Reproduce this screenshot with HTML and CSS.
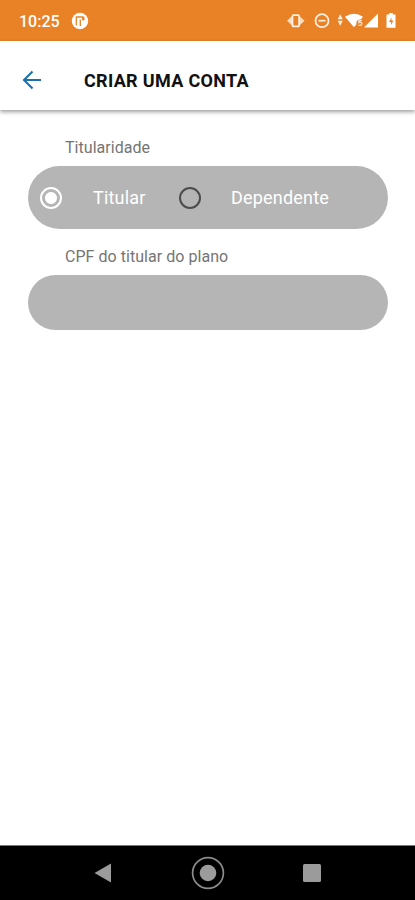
FILE: index.html
```html
<!DOCTYPE html>
<html lang="pt-BR">
<head>
    <meta charset="UTF-8">
    <meta name="viewport" content="width=device-width, initial-scale=1.0">
    <title>Criar uma conta</title>
    <link rel="stylesheet" href="styles.css">
</head>
<body>
    <div class="screen">
        <div class="status-bar">
            <span class="clock">10:25</span>
            <svg class="app-icon" width="18" height="18" viewBox="0 0 18 18">
                <circle cx="9" cy="9" r="8.2" fill="#fff"/>
                <path d="M5.300 4.500v9M5.300 5h6.500M9.300 7.500v6.500" fill="none" stroke="#e98227" stroke-width="1.300"/>
                <rect x="11" y="4.500" width="2.500" height="4" rx="1" fill="#e98227"/>
            </svg>
            <svg class="status-icons" width="112" height="20" viewBox="287 11 112 20">
                <!-- vibrate -->
                <path d="M292.500 15.500v10.500l-5.500-5.200zM299 15.500v10.500l5.500-5.200z" fill="#fbdcc0"/>
                <rect x="292.500" y="15.200" width="6.600" height="11.200" rx="1" fill="#e98227" stroke="#fff1e4" stroke-width="1.700"/>
                <!-- do not disturb -->
                <circle cx="322" cy="20.700" r="6.500" fill="none" stroke="#fff1e4" stroke-width="1.700"/>
                <path d="M318.500 20.700h7" stroke="#fff1e4" stroke-width="1.700"/>
                <!-- wifi -->
                <path d="M337.700 19.200l2.500-5 2.500 5zM337.700 20.700l2.500 5 2.500-5z" fill="#fff1e4"/>
                <path d="M345 16.700q9-6 18 0l-9 10.500z" fill="#fff"/>
                <circle cx="360" cy="23.200" r="3.600" fill="#e98227"/>
                <path d="M361.800 20.500h-3v2q3-.7 3 1.300t-3.300 1.400" fill="none" stroke="#fbdcc0" stroke-width="1.400"/>
                <!-- signal and battery -->
                <path d="M378 13.500v14h-14z" fill="#fff"/>
                <path d="M389.200 13h3.600v1.600h2.700v13.200h-9v-13.200h2.700z" fill="#fff"/>
                <path d="M391.500 17.500l-2.500 4.500h2v3l2.500-4.500h-2z" fill="#e98227"/>
            </svg>
        </div>
        <div class="header">
            <svg class="back" width="20" height="20" viewBox="0 0 20 20">
                <path d="M19 10H2M10.500 1.500L2 10l8.500 8.500" fill="none" stroke="#1c70ae" stroke-width="2.100"/>
            </svg>
            <h1 class="title">CRIAR UMA CONTA</h1>
        </div>
        <div class="form">
            <label class="label">Titularidade</label>
            <div class="radio-group">
                <span class="radio radio-checked"></span>
                <span class="option option-first">Titular</span>
                <span class="radio"></span>
                <span class="option">Dependente</span>
            </div>
            <label class="label label-cpf">CPF do titular do plano</label>
            <div class="input"></div>
        </div>
        <div class="nav-bar">
            <svg width="18" height="20" viewBox="0 0 18 20">
                <path d="M17 0.500v19L0.500 10z" fill="#9b9b9b"/>
            </svg>
            <svg width="34" height="34" viewBox="0 0 34 34">
                <circle cx="17" cy="17" r="15.400" fill="none" stroke="#8c8c8c" stroke-width="1.700"/>
                <circle cx="17" cy="17" r="8.300" fill="#9b9b9b"/>
            </svg>
            <svg width="18" height="18" viewBox="0 0 18 18">
                <rect width="18" height="18" rx="1.500" fill="#9b9b9b"/>
            </svg>
        </div>
    </div>
</body>
</html>
```
FILE: styles.css
```css
body {
    margin: 0;
    font-family: Roboto, sans-serif;
    background-color: #ffffff;
}

.screen {
    display: flex;
    flex-direction: column;
    height: 900px;
    width: 415px;
    overflow: hidden;
}

.status-bar {
    display: flex;
    align-items: center;
    height: 41px;
    box-sizing: border-box;
    padding: 1px 16px 0 19px;
    background-color: #e98227;
}

.clock {
    width: 52px;
    font-size: 16px;
    font-weight: 500;
    color: #ffffff;
}

.status-icons {
    margin-left: auto;
}

.header {
    display: flex;
    align-items: center;
    height: 69px;
    padding: 9px 23px 0 22px;
    box-sizing: border-box;
    background-color: #ffffff;
    box-shadow: 0 2px 4px rgba(0, 0, 0, 0.38);
}

.title {
    margin: 0 0 0 42px;
    font-size: 18px;
    font-weight: 700;
    letter-spacing: 0.32px;
    color: #111111;
}

.form {
    display: flex;
    flex-direction: column;
    flex-grow: 1;
    padding: 28px 27px 0 28px;
}

.label {
    margin-left: 37px;
    height: 19px;
    line-height: 19px;
    font-size: 16px;
    letter-spacing: 0.04px;
    color: #757575;
}

.label-cpf {
    margin-top: 18px;
}

.radio-group {
    display: flex;
    align-items: center;
    height: 63px;
    margin-top: 9px;
    box-sizing: border-box;
    padding-left: 12px;
    border-radius: 32px;
    background-color: #b5b5b5;
}

.radio {
    width: 22px;
    height: 22px;
    box-sizing: border-box;
    border: 2px solid #4c4c4c;
    border-radius: 50%;
}

.radio-checked {
    border-color: #ffffff;
    background: radial-gradient(circle, #ffffff 5.5px, transparent 6.5px);
}

.option {
    margin-left: 30px;
    font-size: 18px;
    letter-spacing: 0.2px;
    color: #ffffff;
}

.option-first {
    margin-left: 31px;
    width: 86px;
}

.input {
    height: 55px;
    margin-top: 9px;
    border-radius: 28px;
    background-color: #b5b5b5;
}

.nav-bar {
    display: flex;
    align-items: center;
    justify-content: space-between;
    height: 55px;
    box-sizing: border-box;
    padding: 0 94px;
    border-top: 1px solid #777777;
    background-color: #000000;
}
```
